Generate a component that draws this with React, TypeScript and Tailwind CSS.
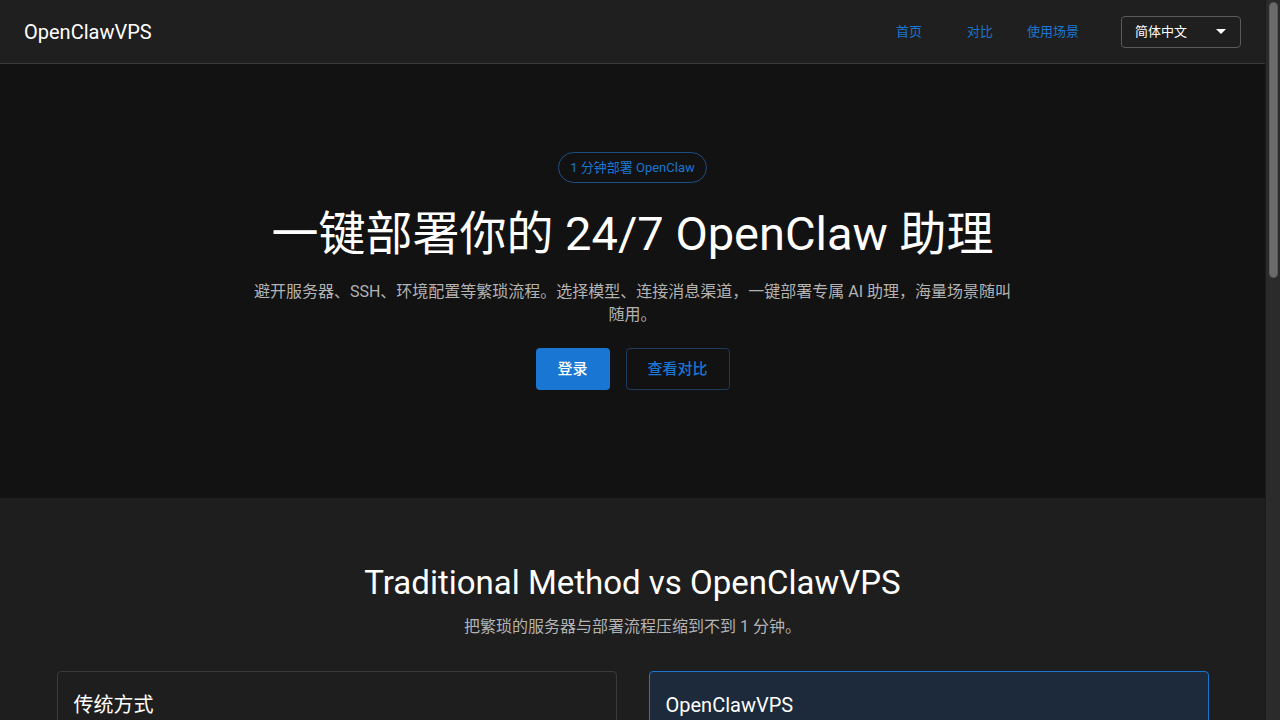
import React from "react";

const font = "font-['Roboto','Noto_Sans_CJK_SC',sans-serif]";

const navLinks = ["首页", "对比", "使用场景"];

const traditional = [
  "购买服务器，手动配置 SSH 与防火墙",
  "安装运行环境、依赖与 Docker",
  "手动编写配置文件，申请模型 API Key",
  "逐个对接消息渠道与回调地址",
];

const ours = [
  "无需服务器，无需 SSH",
  "可视化选择模型，一键完成配置",
  "快速连接 Telegram、Discord 等消息渠道",
  "1 分钟内完成部署，24/7 在线",
];

const Header = () => (
  <div className="h-16 shrink-0 bg-[#1f1f1f] border-b border-[#3a3a3a] flex items-center justify-between px-6">
    <span className="text-[20px] text-white">OpenClawVPS</span>
    <div className="flex items-center">
      <nav className="flex items-center gap-[7px] mr-[34px]">
        {navLinks.map((l) => (
          <a key={l} className="min-w-[64px] px-2 text-center text-[13px] text-[#1976d2] leading-8">
            {l}
          </a>
        ))}
      </nav>
      <div className="w-[120px] h-8 border border-[#5a5a5a] rounded-[4px] flex items-center justify-between pl-[13px] pr-[14px]">
        <span className="text-[13px] text-white">简体中文</span>
        <svg width="10" height="5" viewBox="0 0 10 5">
          <path d="M0 0 L10 0 L5 5 Z" fill="#fff" />
        </svg>
      </div>
    </div>
  </div>
);

const Hero = () => (
  <div className="h-[434px] shrink-0 bg-[#121212] flex flex-col items-center pt-[88px]">
    <div className="h-[31px] px-[11px] rounded-full border border-[#1d4f85] flex items-center text-[13px] text-[#1976d2]">
      1 分钟部署 OpenClaw
    </div>
    <h1 className="mt-[22px] text-[47px] leading-[57px] text-white font-normal">
      一键部署你的 24/7 OpenClaw 助理
    </h1>
    <p className="mt-[18px] max-w-[770px] text-center text-[16px] leading-[23px] text-[#b3b3b3]">
      避开服务器、SSH、环境配置等繁琐流程。选择模型、连接消息渠道，一键部署专属 AI 助理，海量场景随叫随用。
    </p>
    <div className="mt-[22px] flex gap-4">
      <button className="w-[74px] h-[42px] rounded-[4px] bg-[#1976d2] text-white text-[15px] font-medium">
        登录
      </button>
      <button className="w-[104px] h-[42px] rounded-[4px] border border-[#1e3a5c] text-[#1976d2] text-[15px] font-medium">
        查看对比
      </button>
    </div>
  </div>
);

const Compare = () => (
  <div className="bg-[#1e1e1e] pt-16 pb-20">
    <div className="max-w-[1152px] mx-auto">
      <h2 className="text-center text-[33px] leading-[41px] text-white font-normal">
        Traditional Method vs OpenClawVPS
      </h2>
      <p className="mt-3 text-center text-[16px] leading-6 text-[#b3b3b3]">
        把繁琐的服务器与部署流程压缩到不到 1 分钟。
      </p>
      <div className="mt-8 grid grid-cols-2 gap-8">
        <div className="border border-[#3a3a3a] rounded-[4px] bg-[#1e1e1e] px-4 pt-[17px] pb-4">
          <h3 className="text-[20px] leading-8 text-white font-normal">传统方式</h3>
          <ul className="mt-3 flex flex-col gap-3">
            {traditional.map((t) => (
              <li key={t} className="text-[15px] text-[#b3b3b3]">
                × {t}
              </li>
            ))}
          </ul>
        </div>
        <div className="border border-[#1976d2] rounded-[4px] bg-[#1c2a3b] px-4 pt-[17px] pb-4">
          <h3 className="text-[20px] leading-8 text-white font-normal">OpenClawVPS</h3>
          <ul className="mt-3 flex flex-col gap-3">
            {ours.map((t) => (
              <li key={t} className="text-[15px] text-[#d0d0d0]">
                ✓ {t}
              </li>
            ))}
          </ul>
        </div>
      </div>
    </div>
  </div>
);

const Scrollbar = () => (
  <div className="w-[15px] shrink-0 bg-[#2b2b2b] border-l border-[#1a1a1a] pt-[2px] flex justify-center">
    <div className="w-[9px] h-[276px] rounded-full bg-[#6b6b6b] border border-[#5a5a5a]" />
  </div>
);

const App = () => {
  return (
    <div className={`${font} h-screen flex overflow-hidden bg-[#121212]`}>
      <div className="flex-1 flex flex-col overflow-hidden">
        <Header />
        <Hero />
        <Compare />
      </div>
      <Scrollbar />
    </div>
  );
};

export default App;
